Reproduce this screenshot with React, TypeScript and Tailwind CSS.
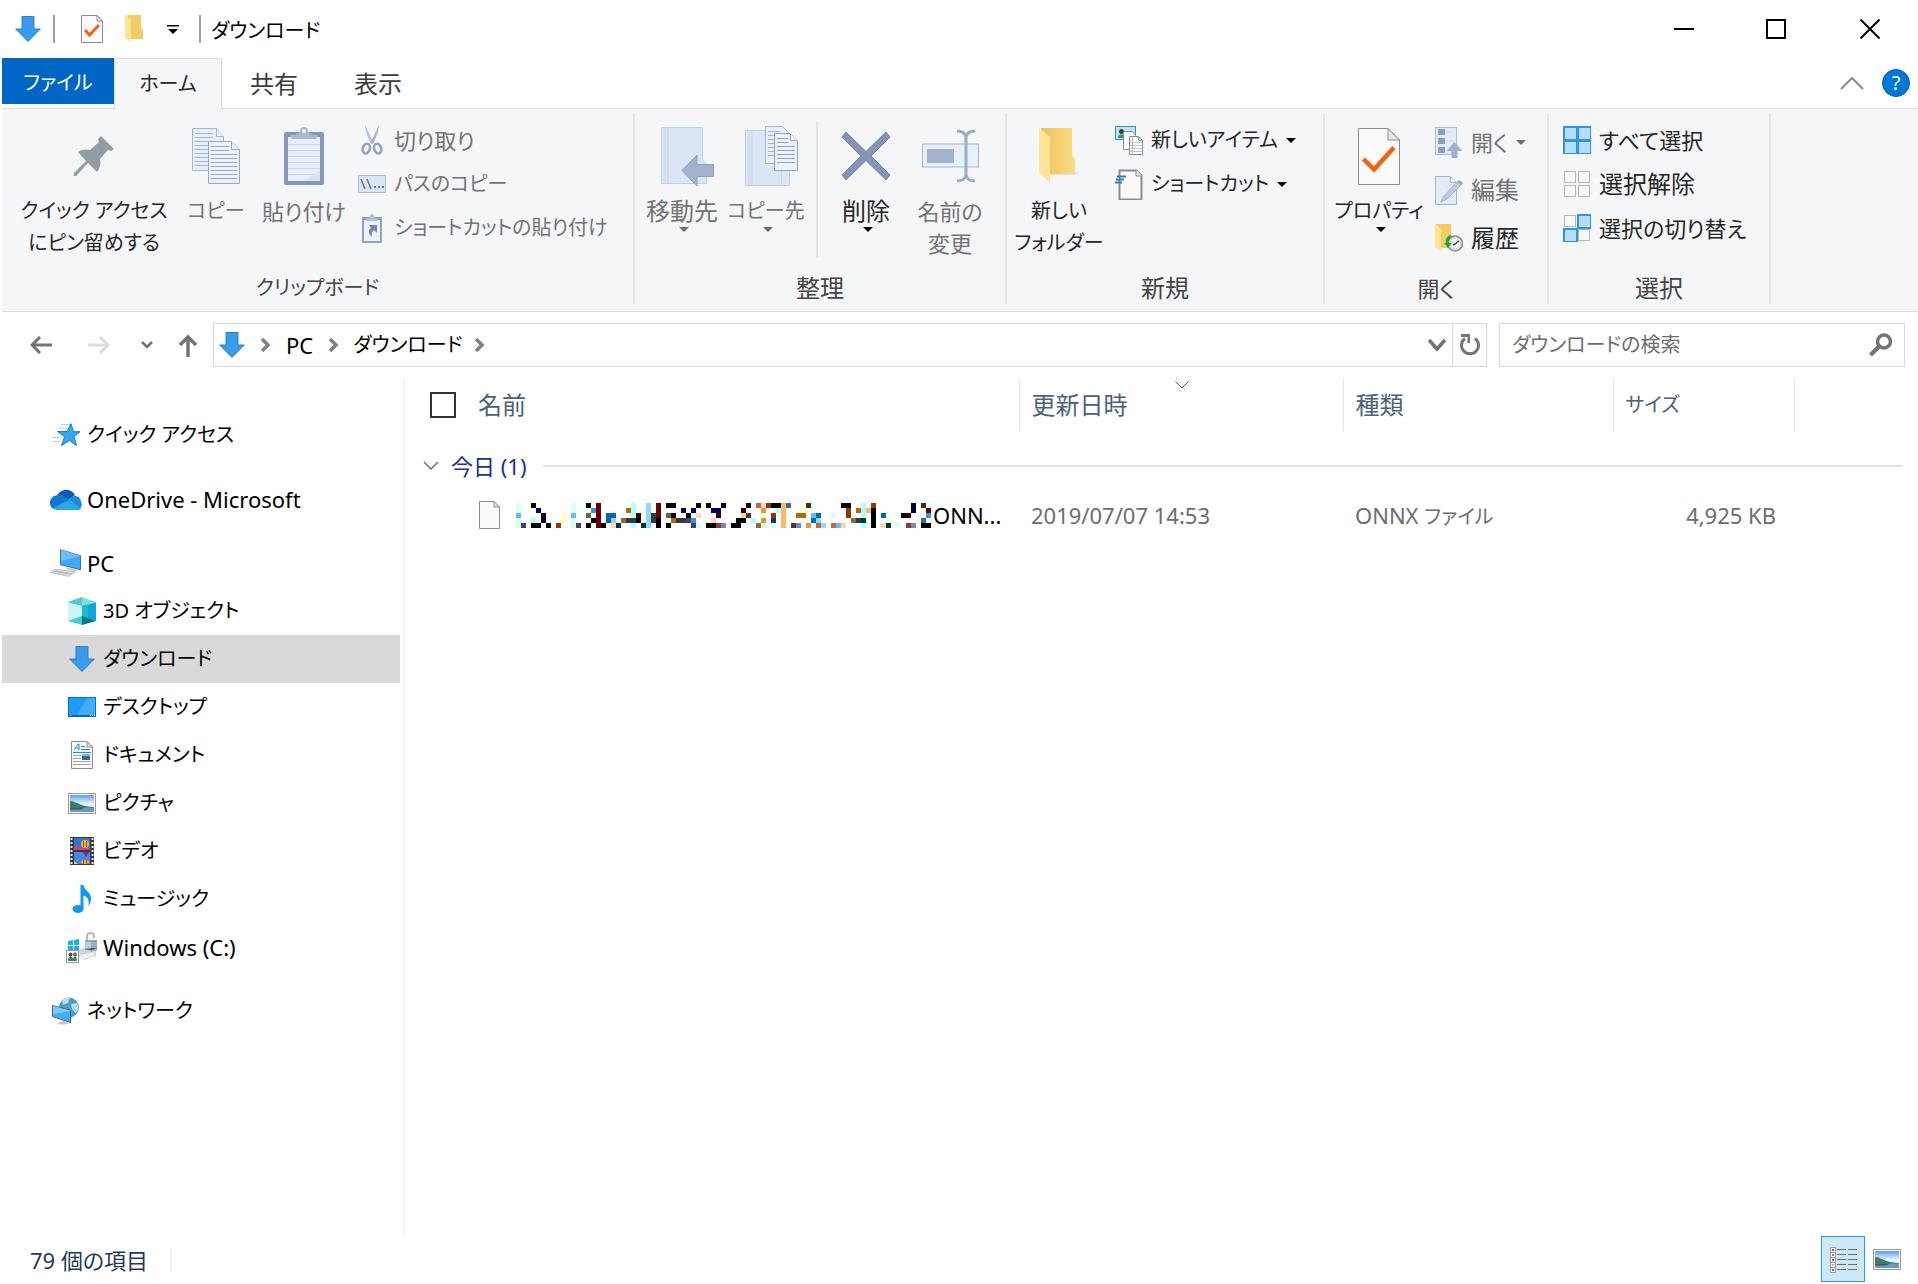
import React from "react";
import clsx from "clsx";

type IconProps = { className?: string };

/* ---------- shared icons ---------- */

const DownArrowIcon = ({ className }: IconProps) => (
  <svg width="26" height="26" viewBox="0 0 26 26" className={className}>
    <path
      d="M7 .5h12v12.500h6.300L13 25.500.7 13H7z"
      fill="#3a9bea"
      stroke="#2b7fc9"
      strokeLinejoin="round"
    />
  </svg>
);

const CaretIcon = ({ className }: IconProps) => (
  <svg width="10" height="5" viewBox="0 0 10 5" className={className}>
    <path d="M0 0h10L5 5z" fill="currentColor" />
  </svg>
);

const CrumbIcon = () => (
  <svg width="12" height="14" viewBox="0 0 12 14">
    <path d="M2 1l6 6-6 6" fill="none" stroke="#808080" strokeWidth="3.500" />
  </svg>
);

const PictureIcon = ({ className }: IconProps) => (
  <svg width="28" height="21" viewBox="0 0 28 21" className={className}>
    <defs>
      <linearGradient id="picture-sky" x1="0" x2="0" y1="0" y2="1">
        <stop offset="0" stopColor="#5a9bf8" />
        <stop offset=".5" stopColor="#e6f2fd" />
      </linearGradient>
    </defs>
    <rect x=".5" y=".5" width="27" height="20" fill="#fff" stroke="#9a9a9a" />
    <rect x="2" y="2" width="24" height="17" fill="url(#picture-sky)" />
    <path d="M2 8c4 0 6 2 9 3 4 2 10 3 15 3v1H2z" fill="#3f7d5c" />
    <rect x="2" y="14.500" width="24" height="4.500" fill="#6d97c4" />
    <path d="M2 14.500h16l-6 2H2z" fill="#2f5a78" />
  </svg>
);

const Page = ({ w, h, fold }: { w: number; h: number; fold: number }) => (
  <>
    <path
      d={`M.5 .5H${w - fold}L${w - 0.5} ${fold}V${h - 0.5}H.5z`}
      fill="#fbfbfb"
      stroke="#8c8c8c"
    />
    <path
      d={`M${w - fold} .5V${fold}H${w - 0.5}z`}
      fill="#e8e8e8"
      stroke="#8c8c8c"
    />
  </>
);

/* ---------- title bar icons ---------- */

const SmallPropertiesIcon = () => (
  <svg width="22" height="28" viewBox="0 0 22 28">
    <Page w={22} h={28} fold={6} />
    <path d="M4 15l4.500 5L18 10" fill="none" stroke="#f7630c" strokeWidth="3" />
  </svg>
);

const SmallFolderIcon = () => (
  <svg width="20" height="28" viewBox="0 0 20 28">
    <path d="M2 0h14v13l2 2v9H4z" fill="#f3cc66" />
    <path d="M0 0l6 5v22l-6-4z" fill="#ffe394" />
  </svg>
);

/* ---------- ribbon icons, large ---------- */

const PinIcon = () => (
  <svg width="42" height="42" viewBox="0 0 42 42">
    <path
      d="M28 1l13 13-3 2-3-1-8 9c1 5 0 9-3 13l-9-9L3 41H1v-3l12-12-8-9c4-3 8-3 12-2l9-8-1-3z"
      fill="#919da3"
    />
  </svg>
);

const textLines = (x: number, y: number, w: number, n: number, step: number) =>
  Array.from({ length: n }, (_, i) => (
    <path key={i} d={`M${x} ${y + i * step}h${w}`} strokeWidth="1" />
  ));

const CopyIcon = () => (
  <svg width="48" height="56" viewBox="0 0 48 56">
    <g fill="#e9effa" stroke="#a6b6d2">
      <path d="M.5 .5h24l7 8v34h-31z" />
      <path d="M24.500 .5v8h7" />
      {textLines(3, 5.5, 18, 2, 4)}
      {textLines(3, 13.5, 25, 7, 4)}
    </g>
    <g fill="#edf2fc" stroke="#97a9c9">
      <path d="M16.500 13.500h23l8 8v34h-31z" />
      <path d="M39.500 13.500v8h8" />
      {textLines(19, 18.5, 18, 2, 4)}
      {textLines(19, 26.5, 26, 7, 4)}
    </g>
  </svg>
);

const PasteIcon = () => (
  <svg width="40" height="58" viewBox="0 0 40 58">
    <rect y="5" width="40" height="53" rx="2" fill="#8497bd" />
    <rect x="4" y="10" width="32" height="44" fill="#e8effb" />
    <g stroke="#cad6ea">{textLines(4, 17.5, 32, 6, 6)}</g>
    <path d="M36 44v10H20z" fill="#d7e2f5" />
    <path d="M6 8c7 0 9-2 10-4a4 4 0 018 0c1 2 3 4 10 4l-2 4H8z" fill="#a9b7d0" />
    <circle cx="20" cy="4" r="2" fill="#f5f6f7" />
  </svg>
);

const MoveToIcon = () => (
  <svg width="63" height="60" viewBox="-10 0 63 60">
    <path d="M.5 1.500h41v32l4 5v19H.5z" fill="#dbe5f4" stroke="#c1cfe6" />
    <path d="M4 2v55M7 2v55" stroke="#cad7eb" />
    <path
      d="M21 44.500l15-15.500v9.500h16.500v12H36V60z"
      fill="#a3b1cc"
      stroke="#8c9fc2"
    />
  </svg>
);

const CopyToIcon = () => (
  <svg width="63" height="60" viewBox="-10 0 63 60">
    <path d="M.5 4.500h41v32l3 4v19H.5z" fill="#dbe5f4" stroke="#c1cfe6" />
    <path d="M4 5v54M7 5v54M36.500 40v19" stroke="#c5d3e9" />
    <g fill="#e9effa" stroke="#a6b6d2">
      <path d="M20.500 .5h17l6 6v31h-23z" />
      {textLines(23, 5.5, 12, 2, 4)}
      {textLines(23, 13.5, 18, 5, 4)}
    </g>
    <g fill="#edf2fc" stroke="#8fa2c5">
      <path d="M29.500 7.500h16l7 7v30h-23z" />
      <path d="M45.500 7.500v7h7" />
      {textLines(32, 12.5, 11, 2, 4)}
      {textLines(32, 20.5, 18, 5, 4)}
    </g>
  </svg>
);

const DeleteIcon = () => (
  <svg width="50" height="50" viewBox="0 0 50 50">
    <path
      d="M5 1l20 19.500L45 1l4 5-19 19 19 19-4 5-20-19.500L5 49l-4-5 19-19L1 6z"
      fill="#8494b6"
      stroke="#7285ad"
    />
  </svg>
);

const RenameIcon = () => (
  <svg width="57" height="54" viewBox="0 0 57 54">
    <rect x=".5" y="15" width="56" height="23" fill="#e8effc" stroke="#a2b4d6" />
    <rect x="5" y="20" width="27" height="14" fill="#a3b1cc" />
    <path
      d="M35 2c5 0 8 2 9 6 1-4 4-6 9-6M35 52c5 0 8-2 9-6 1 4 4 6 9 6M44 7v40"
      fill="none"
      stroke="#9cacc9"
      strokeWidth="3"
    />
  </svg>
);

const FolderIcon = () => (
  <svg width="40" height="56" viewBox="0 0 40 56">
    <defs>
      <linearGradient id="folder-body" x1="0" x2="1">
        <stop offset="0" stopColor="#e9c25c" />
        <stop offset="1" stopColor="#fddc82" />
      </linearGradient>
    </defs>
    <path d="M36 43l4 2-4 2H12v-4z" fill="#e6e3dc" />
    <path d="M2 0h31v28l3 3v15H10z" fill="url(#folder-body)" />
    <path d="M0 0l11 9v46L0 44z" fill="#ffe596" />
  </svg>
);

const PropertiesIcon = () => (
  <svg width="42" height="57" viewBox="0 0 42 57">
    <Page w={42} h={57} fold={12} />
    <path
      d="M5.500 31L16 41.500 36 19.500"
      fill="none"
      stroke="#f7630c"
      strokeWidth="4.500"
    />
  </svg>
);

/* ---------- ribbon icons, small ---------- */

const CutIcon = () => (
  <svg width="22" height="30" viewBox="0 0 22 30">
    <path d="M4 0l8.500 18-2.500 1C7 12 4 6 4 0z" fill="#b4c1d9" />
    <path d="M18 0L9.500 18l2.500 1c3-7 6-13 6-19z" fill="#a3b2cf" />
    <g fill="none" stroke="#8fa1c4" strokeWidth="2.500">
      <ellipse cx="5.500" cy="23.500" rx="3.500" ry="5" transform="rotate(18 5 23)" />
      <ellipse cx="16.500" cy="23.500" rx="3.500" ry="5" transform="rotate(-18 17 23)" />
    </g>
  </svg>
);

const CopyPathIcon = () => (
  <svg width="28" height="18" viewBox="0 0 28 18">
    <rect x=".5" y=".5" width="27" height="17" fill="#dbe5f6" stroke="#a7b6d2" />
    <path d="M3 4l4 10M9 4l4 10" stroke="#60749e" strokeWidth="1.500" />
    <path d="M16 12h2M20 12h2M24 12h2" stroke="#60749e" strokeWidth="2" />
  </svg>
);

const PasteShortcutIcon = () => (
  <svg width="20" height="29" viewBox="0 0 20 29">
    <rect y="3" width="20" height="26" rx="1" fill="#8fa1c4" />
    <rect x="2" y="6" width="16" height="21" fill="#edf2fc" />
    <path d="M4 5c3 0 4-1 4-3a2 2 0 014 0c0 2 1 3 4 3v2H4z" fill="#b4c1d9" />
    <path d="M7 11h8v8l-3-3c-2 2-3 4-2 7-4-3-4-7-1-9z" fill="#7388b3" />
  </svg>
);

const NewItemIcon = () => (
  <svg width="28" height="29" viewBox="0 0 28 29">
    <rect x=".5" y=".5" width="20" height="13" fill="#bfe3f8" stroke="#3c8dbc" />
    <path d="M3 12c0-5 6-5 7 0z" fill="#3f8f6c" />
    <circle cx="6.500" cy="5.500" r="2.500" fill="#4a3b30" />
    <path d="M8.500 5.500h9l3 4v14h-12z" fill="#fff" stroke="#8c8c8c" />
    <path d="M14.500 10.500h9l4 4v14h-13z" fill="#fff" stroke="#8c8c8c" />
    <path d="M23.500 10.500v4h4" fill="none" stroke="#8c8c8c" />
    <path d="M15 16.500h12M15 19.500h12M15 22.500h12M15 25.500h12" stroke="#a9cdec" />
    <path d="M17.500 11v17" stroke="#f0a0a0" />
  </svg>
);

const NewShortcutIcon = () => (
  <svg width="28" height="31" viewBox="0 0 28 31">
    <path d="M4.500 1.500h17l5 5v24h-22z" fill="#fafafa" stroke="#8c8c8c" strokeWidth="2" />
    <path d="M21 1v6h6" fill="#e8e8e8" stroke="#8c8c8c" />
    <path d="M2 7.500h9M1 10.500h8M0 13.500h7" stroke="#2f7fc1" strokeWidth="2" />
  </svg>
);

const OpenIcon = () => (
  <svg width="28" height="31" viewBox="0 0 28 31">
    <rect x=".5" y=".5" width="21" height="27" fill="#e3ebf8" stroke="#a9b9d6" />
    <g fill="#8b9dc1">
      <rect x="3" y="2" width="7" height="6" />
      <rect x="3" y="11" width="7" height="6" />
      <rect x="3" y="20" width="7" height="6" />
    </g>
    <path d="M12 5h6M12 14h6" stroke="#c3d0e6" />
    <path d="M19.500 15l8 9h-5v7h-6v-7h-5z" fill="#9fafcd" />
  </svg>
);

const EditIcon = () => (
  <svg width="28" height="29" viewBox="0 0 28 29">
    <path d="M.5 .5h15l6 6v22H.5z" fill="#e3ebf8" stroke="#a0b2d4" />
    <path d="M15.500 .5v6h6" fill="#f4f7fd" stroke="#a0b2d4" />
    <path d="M6 26l2-5L23 5l4 3-15 15z" fill="#bccae2" stroke="#9fb0d0" />
    <path d="M22 6l2-2 4 3-2 2z" fill="#94a7ca" />
  </svg>
);

const HistoryIcon = () => (
  <svg width="28" height="28" viewBox="0 0 28 28">
    <path d="M1 0h15v12l2 2v10H5z" fill="#f3cc66" />
    <path d="M0 0l6 5v22l-6-4z" fill="#ffe394" />
    <circle cx="20" cy="19.500" r="7.500" fill="#d5d8da" stroke="#8a8f94" strokeWidth="1.500" />
    <circle cx="20" cy="19.500" r="5" fill="#eceeef" />
    <path d="M20 20l4-3M20 20l-2 1" stroke="#444" strokeWidth="1.500" />
    <path d="M16 11c-4 1-6 4-5 8H9l4 5 4-5h-3c0-3 1-5 3-6z" fill="#23a63a" />
  </svg>
);

const cells = [
  [1, 1],
  [15, 1],
  [1, 15],
  [15, 15],
];

const SelectIcon = ({ on }: { on: number[] }) => (
  <svg width="28" height="28" viewBox="0 0 28 28">
    {cells.map(([x, y], i) => (
      <rect
        key={i}
        x={on.includes(i) ? x : x + 0.5}
        y={on.includes(i) ? y : y + 0.5}
        width={on.includes(i) ? 13 : 11}
        height={on.includes(i) ? 13 : 11}
        fill={on.includes(i) ? "#b5defa" : "#f9f9f9"}
        stroke={on.includes(i) ? "#2d95e3" : "#b5b5b5"}
        strokeWidth={on.includes(i) ? 2 : 1}
      />
    ))}
  </svg>
);

/* ---------- tree icons ---------- */

const QuickAccessIcon = () => (
  <svg width="30" height="24" viewBox="0 0 30 24">
    <path d="M10 1.500h9M7 5h9M1 14.500h8M2 18.500h6" stroke="#a5d3f2" />
    <path
      d="M20 .7l2.500 8H29l-6 4.800 2.500 9.200-7-5.200-8 5.200 3-9L6.500 8.500H16z"
      fill="#35a7f0"
      stroke="#1c7fc6"
    />
  </svg>
);

const OneDriveIcon = () => (
  <svg width="32" height="21" viewBox="0 0 32 21">
    <path d="M7 7C10 0 20-2 25 6l-8 6z" fill="#0b5cb5" />
    <path d="M6 6.500C12 4 16 9 22 12L3 20C-2 16-1 8 6 6.500z" fill="#1277d3" />
    <path d="M19 10c3-5 12-4 12 3 2 3 0 6-2 7z" fill="#1b8be0" />
    <path d="M3 19l16-8 12 8c-1 2-2 2-4 2H7c-2 0-3-1-4-2z" fill="#29a7ea" />
  </svg>
);

const PcIcon = () => (
  <svg width="32" height="28" viewBox="0 0 32 28">
    <path d="M10.500 .7l20 6v14l-20-5z" fill="#3fa9f5" stroke="#5d6b78" />
    <path d="M11 12L30 7v-0.500L11 1z" fill="#6cbffa" />
    <path d="M17 18l8 2 3 2-5 1-7-3z" fill="#c9ced3" />
    <path d="M5 20l20 3-6 4.500L0 23.500z" fill="#d9dcdf" stroke="#b3b8bd" strokeWidth=".7" />
    <path d="M4 22l18 3M8 21l-5 3M13 22l-5 3M18 23l-5 3" stroke="#a3a9ae" strokeWidth=".7" />
  </svg>
);

const CubeIcon = () => (
  <svg width="28" height="28" viewBox="0 0 28 28">
    <path d="M0 5l14-5v9L0 6z" fill="#54c8cb" />
    <path d="M28 5L14 0v9l14-3z" fill="#7fe0dd" />
    <path d="M0 5.500L14 9v11L0 24z" fill="#cdf3f3" />
    <path d="M28 5.500L14 9v11l14 4z" fill="#12a5dd" />
    <path d="M14 9l6-1.500V22l-6-2z" fill="#19bcc8" />
    <path d="M0 24l14-5v9z" fill="#3ecfd2" />
    <path d="M28 24l-14-5v9z" fill="#067585" />
  </svg>
);

const DesktopIcon = () => (
  <svg width="28" height="20" viewBox="0 0 28 20">
    <rect x=".5" y=".5" width="27" height="19" fill="#1c9bf8" stroke="#0a6fba" />
    <path d="M27 1v17H9L19 1z" fill="#41aefb" />
    <path d="M1 18.500h26" stroke="#0d5f9e" />
    <path d="M2 18.500h2M22 18.500h5" stroke="#fff" strokeDasharray="1 1" />
  </svg>
);

const DocumentIcon = () => (
  <svg width="22" height="28" viewBox="0 0 22 28">
    <Page w={22} h={28} fold={6} />
    <path d="M3 9l4-6h1v6M5 7h3M10 5.500h4M10 8.500h9" fill="none" stroke="#1a8fe0" />
    <path d="M2 11.500h18" stroke="#1a8fe0" />
    <path d="M2 14.500h8M2 17.500h8M2 20.500h18M2 23.500h18" stroke="#a5a5a5" />
    <rect x="11" y="13" width="8" height="6" fill="#33698f" />
    <rect x="11" y="13" width="8" height="2" fill="#7fb4e8" />
  </svg>
);

const VideoIcon = () => (
  <svg width="24" height="28" viewBox="0 0 24 28">
    <rect width="24" height="28" fill="#3a3a3a" />
    <path d="M1.500 1v27M22.500 1v27" stroke="#e8e8e8" strokeWidth="2" strokeDasharray="2 2" />
    <rect x="4" y="1" width="16" height="12" fill="#3173dd" />
    <rect x="4" y="15" width="16" height="12" fill="#4a86e6" />
    <path d="M4 10c2-2 4-1 5 0l11 1v2H4z" fill="#c7447c" />
    <ellipse cx="15" cy="7" rx="4" ry="4" fill="#f0c514" />
    <path d="M13.500 4v6M16.500 4v6" stroke="#c4281c" />
    <path d="M13 15h6l-3 5z" fill="#7a2a86" />
    <ellipse cx="15" cy="25" rx="4" ry="2" fill="#f0c514" />
    <path d="M13.500 23v4M16.500 23v4" stroke="#c4281c" />
    <path d="M4 24l4 3H4z" fill="#e6d22a" />
  </svg>
);

const MusicIcon = () => (
  <svg width="20" height="28" viewBox="0 0 20 28">
    <ellipse cx="6" cy="24" rx="5.500" ry="4" fill="#0d99f2" />
    <path d="M8.500 0h3c1 6 8 7 7.500 14 0 3-1 5-2.500 7 1-6-1-9-5-10.500V24h-3z" fill="#0d99f2" />
  </svg>
);

const DriveIcon = () => (
  <svg width="32" height="31" viewBox="0 0 32 31">
    <g fill="#13b1f0">
      <path d="M2 9l5-1v5H2zM8 8l5-1v6H8zM2 14h5v4H2zM8 14h5v4H8z" />
    </g>
    <path d="M13 18l8-4 9 4v6l-12 4-5-3z" fill="#d3d6d9" />
    <path d="M14 23l14-3v4l-14 4z" fill="#eceeef" />
    <path d="M21 10V4c0-4 7-4 7 0v2" fill="none" stroke="#b4b9be" strokeWidth="2" />
    <path d="M19 9l12-1v10l-6 2-6-2z" fill="#c3ccd3" />
    <path d="M25 9h6v9l-6 2z" fill="#a2adb6" />
    <path d="M19 9h12M19 17l6 1 6-2" stroke="#3f8fc5" />
    <rect x=".5" y="18.500" width="12" height="12" fill="#fff" stroke="#9a9a9a" />
    <path d="M2 29c0-6 4-6 5-2 1-4 4-4 4 2z" fill="#2f8b74" />
    <circle cx="4.500" cy="22.500" r="2" fill="#6d4a35" />
    <circle cx="9" cy="22.500" r="2" fill="#8a6246" />
  </svg>
);

const NetworkIcon = () => (
  <svg width="28" height="28" viewBox="0 0 28 28">
    <circle cx="17" cy="10.500" r="10" fill="#4d9cc4" />
    <path d="M10 3c3-3 6-2 8-2l-2 5-5 2zM19 7l6-1c3 5 1 8-1 10l-4-4zM13 2l9 2" fill="#b9dcec" />
    <path d="M.5 8.500l18 5v12l-18-6z" fill="#43aef5" stroke="#4c6678" />
    <path d="M1 17l17-3v-0.500L1 9z" fill="#7fcafa" />
    <path d="M5 26l7-2 5 2c-3 2-9 2-12 0z" fill="#c2c7cb" />
  </svg>
);

/* ---------- pixelated file name ---------- */

const mosaicColors: Record<string, string> = {
  K: "#000000",
  N: "#000068",
  n: "#000038",
  R: "#680000",
  r: "#380000",
  C: "#d8ffff",
  c: "#b0ffff",
  B: "#90d8ff",
  b: "#68b8ff",
  D: "#0068b8",
  d: "#4090e0",
  O: "#b86800",
  o: "#ffb868",
  G: "#383838",
  L: "#686838",
  Y: "#ffffb8",
  y: "#ffffd8",
  P: "#ffd8b8",
  p: "#404070",
  T: "#003838",
  W: "#906838",
  M: "#903838",
  U: "#6890b8",
  g: "#d8ffd8",
  F: "#903800",
  e: "#e09848",
  m: "#c06840",
  s: "#3868a0",
  l: "#383800",
  x: "#603030",
  H: "#003890",
  a: "#ffd898",
};

// one string per row, "<column><color>"
const mosaicRows = [
  "0C 3K 11C 14K 16R 23c 26B 28R 30K 31K 36K 38K 41n 46K 48m 49P 50F 51K 52K 53o 54s 58l 59C 65K 66K 69c 71F 79n 81l 82C",
  "0C 4N 11C 15d 16R 22O 23c 26B 28R 33N 35N 39N 40N 45r 49e 52c 53o 57y 66F 68O 69c 70o 71K 79n 82R",
  "0b 5K 9Y 11b 14L 16R 18D 19D 23c 24r 26B 27G 28R 30L 31n 34K 36P 40r 45a 46x 49Y 51F 53o 56O 57O 59b 60D 63C 66F 69c 71K 73D 77K 78r 82d",
  "0C 3c 5n 9Y 11C 15K 16R 18D 19B 21W 22G 23G 24K 26B 27G 28K 31O 32G 33G 34p 35d 39P 44K 45n 47c 49e 51H 53o 58y 59D 60B 67W 68G 69T 71K 75y 81s",
  "0g 1p 3K 4K 6K 8F 11g 12p 14K 16R 17K 19P 20T 23c 25T 26B 28K 30K 35p 36C 38K 39K 40M 41U 43K 44K 48W 49g 51C 53o 55x 56U 58e 60m 61B 63m 64b 65a 69c 71K 73P 74T 76C 78M 79U 81K 82K",
];

const Mosaic = () => (
  <svg
    width="415"
    height="25"
    viewBox="0 0 83 5"
    shapeRendering="crispEdges"
    className="shrink-0"
  >
    {mosaicRows.map((row, y) =>
      row
        .split(" ")
        .map((cell) => (
          <rect
            key={`${y}-${cell}`}
            x={parseInt(cell)}
            y={y}
            width="1"
            height="1"
            fill={mosaicColors[cell.slice(-1)]}
          />
        )),
    )}
  </svg>
);

/* ---------- ribbon ---------- */

type RibbonButtonProps = {
  icon: React.ReactNode;
  label: React.ReactNode;
  className?: string;
  disabled?: boolean;
  menu?: boolean;
};

const LargeButton = ({
  icon,
  label,
  className,
  disabled,
  menu,
}: RibbonButtonProps) => (
  <button
    type="button"
    disabled={disabled}
    className={clsx(
      "flex flex-col items-center shrink-0 pt-[5px] leading-8 whitespace-nowrap",
      disabled ? "text-[#737373]" : "text-[#262626]",
      className,
    )}
  >
    <span className="mb-[2px] flex h-[74px] items-center justify-center">
      {icon}
    </span>
    <span>{label}</span>
    {menu && (
      <CaretIcon
        className={clsx("ml-1", disabled ? "text-[#6d6d6d]" : "text-black")}
      />
    )}
  </button>
);

const SmallButton = ({
  icon,
  label,
  className,
  disabled,
  menu,
}: RibbonButtonProps) => (
  <button
    type="button"
    disabled={disabled}
    className={clsx(
      "flex items-center gap-2 whitespace-nowrap",
      disabled ? "text-[#737373]" : "text-[#262626]",
      className,
    )}
  >
    <span className="flex w-7 justify-center">{icon}</span>
    <span>{label}</span>
    {menu && (
      <CaretIcon className={disabled ? "text-[#6d6d6d]" : "text-black"} />
    )}
  </button>
);

type RibbonGroupProps = {
  title: string;
  titleClassName: string;
  className: string;
  bodyClassName: string;
  children: React.ReactNode;
};

const RibbonGroup = ({
  title,
  titleClassName,
  className,
  bodyClassName,
  children,
}: RibbonGroupProps) => (
  <section
    className={clsx(
      "flex shrink-0 flex-col border-r-2 border-[#e2e3e4]",
      className,
    )}
  >
    <div className={clsx("flex flex-1 items-start", bodyClassName)}>
      {children}
    </div>
    <h2 className={clsx("text-center leading-8 text-[#444]", titleClassName)}>
      {title}
    </h2>
  </section>
);

const Ribbon = () => (
  <div className="flex h-[204px] shrink-0 overflow-hidden border-y border-[#dadbdc] bg-[#f5f6f7] pt-[5px] pb-[7px]">
    <RibbonGroup
      title="クリップボード"
      titleClassName="text-xl"
      className="w-[633px]"
      bodyClassName="pl-4"
    >
      <LargeButton
        className="w-[152px] text-xl"
        icon={<PinIcon />}
        label={
          <>
            クイック アクセス
            <br />
            にピン留めする
          </>
        }
      />
      <LargeButton className="ml-2 w-[76px] text-xl" icon={<CopyIcon />} label="コピー" disabled />
      <LargeButton className="w-[100px] text-[22px]" icon={<PasteIcon />} label="貼り付け" disabled />
      <div className="ml-1 flex flex-col pt-1">
        <SmallButton className="h-11 text-[22px]" icon={<CutIcon />} label="切り取り" disabled />
        <SmallButton className="h-11 text-xl" icon={<CopyPathIcon />} label="パスのコピー" disabled />
        <SmallButton
          className="h-11 text-xl"
          icon={<PasteShortcutIcon />}
          label="ショートカットの貼り付け"
          disabled
        />
      </div>
    </RibbonGroup>

    <RibbonGroup
      title="整理"
      titleClassName="text-2xl"
      className="w-[372px]"
      bodyClassName="pl-[7px]"
    >
      <LargeButton className="w-20 text-2xl" icon={<MoveToIcon />} label="移動先" disabled menu />
      <LargeButton className="w-[88px] text-xl" icon={<CopyToIcon />} label="コピー先" disabled menu />
      <span className="mt-2 mr-1 ml-1.5 h-[136px] w-[2px] bg-[#e2e3e4]" />
      <LargeButton className="w-[88px] text-2xl" icon={<DeleteIcon />} label="削除" menu />
      <LargeButton
        className="w-20 text-[22px]"
        icon={<RenameIcon />}
        label={
          <>
            名前の
            <br />
            変更
          </>
        }
        disabled
      />
    </RibbonGroup>

    <RibbonGroup
      title="新規"
      titleClassName="text-2xl"
      className="w-[318px]"
      bodyClassName="pl-1"
    >
      <LargeButton
        className="w-24 text-xl"
        icon={<FolderIcon />}
        label={
          <>
            新しい
            <br />
            フォルダー
          </>
        }
      />
      <div className="ml-2 flex flex-col pt-1">
        <SmallButton className="h-11 text-xl" icon={<NewItemIcon />} label="新しいアイテム" menu />
        <SmallButton className="h-11 text-xl" icon={<NewShortcutIcon />} label="ショートカット" menu />
      </div>
    </RibbonGroup>

    <RibbonGroup
      title="開く"
      titleClassName="text-[22px]"
      className="w-[224px]"
      bodyClassName="pl-1"
    >
      <LargeButton className="w-[100px] text-xl" icon={<PropertiesIcon />} label="プロパティ" menu />
      <div className="ml-1.5 flex flex-col pt-1">
        <SmallButton className="h-12 text-[22px]" icon={<OpenIcon />} label="開く" disabled menu />
        <SmallButton className="h-12 text-2xl" icon={<EditIcon />} label="編集" disabled />
        <SmallButton className="h-12 text-2xl" icon={<HistoryIcon />} label="履歴" />
      </div>
    </RibbonGroup>

    <RibbonGroup
      title="選択"
      titleClassName="text-2xl"
      className="w-[222px]"
      bodyClassName="pl-[14px]"
    >
      <div className="flex flex-col pt-1">
        <SmallButton className="h-11 text-[22px]" icon={<SelectIcon on={[0, 1, 2, 3]} />} label="すべて選択" />
        <SmallButton className="h-11 text-2xl" icon={<SelectIcon on={[]} />} label="選択解除" />
        <SmallButton className="h-11 text-[22px]" icon={<SelectIcon on={[1, 2]} />} label="選択の切り替え" />
      </div>
    </RibbonGroup>
  </div>
);

/* ---------- window chrome ---------- */

const TitleBar = () => (
  <header className="flex h-[58px] shrink-0 items-center">
    <DownArrowIcon className="ml-[13px]" />
    <span className="ml-3 h-7 w-[2px] bg-[#a0a0a0]" />
    <button type="button" aria-label="プロパティ" className="ml-[26px]">
      <SmallPropertiesIcon />
    </button>
    <button type="button" aria-label="新しいフォルダー" className="ml-[22px]">
      <SmallFolderIcon />
    </button>
    <button type="button" aria-label="カスタマイズ" className="ml-[22px]">
      <svg width="12" height="9" viewBox="0 0 12 9">
        <path d="M0 0h12v1.500H0zM1 4h10L6 9z" />
      </svg>
    </button>
    <span className="ml-5 h-7 w-[2px] bg-[#a0a0a0]" />
    <h1 className="ml-[10px] pt-1 text-xl text-black">ダウンロード</h1>
    <div className="ml-auto flex items-center">
      <button type="button" aria-label="最小化" className="flex w-[92px] justify-center">
        <svg width="20" height="20" viewBox="0 0 20 20">
          <path d="M0 10h20" stroke="#000" strokeWidth="2" />
        </svg>
      </button>
      <button type="button" aria-label="最大化" className="flex w-[92px] justify-center">
        <svg width="20" height="20" viewBox="0 0 20 20">
          <rect x="1" y="1" width="18" height="18" fill="none" stroke="#000" strokeWidth="2" />
        </svg>
      </button>
      <button type="button" aria-label="閉じる" className="flex w-24 justify-center">
        <svg width="20" height="20" viewBox="0 0 20 20">
          <path d="M.5 .5l19 19M19.500 .5l-19 19" stroke="#000" strokeWidth="2" />
        </svg>
      </button>
    </div>
  </header>
);

const Tabs = () => (
  <nav className="flex h-[50px] shrink-0 items-start text-[#3b3b3b]">
    <button type="button" className="h-[46px] w-28 bg-[#0066c5] pt-1 text-xl text-white">
      ファイル
    </button>
    <button
      type="button"
      className="relative h-[51px] w-[108px] border border-b-0 border-[#dadbdc] bg-[#f5f6f7] text-xl text-[#262626]"
    >
      ホーム
    </button>
    <button type="button" className="h-[51px] w-[104px] text-2xl">
      共有
    </button>
    <button type="button" className="h-[51px] w-[104px] text-2xl">
      表示
    </button>
    <div className="mt-[11px] ml-auto flex items-center gap-[18px] pr-2">
      <button type="button" aria-label="リボンの最小化">
        <svg width="24" height="13" viewBox="0 0 24 13">
          <path d="M1 12L12 1l11 11" fill="none" stroke="#8a8a8a" strokeWidth="2" />
        </svg>
      </button>
      <button
        type="button"
        className="size-7 rounded-full border border-[#0062ad] bg-[#0078d7] text-xl leading-6 text-white"
      >
        ?
      </button>
    </div>
  </nav>
);

const AddressRow = () => (
  <div className="flex shrink-0 items-center pt-[11px] pr-[13px] pb-3">
    <button type="button" aria-label="戻る" className="ml-7">
      <svg width="22" height="18" viewBox="0 0 22 18">
        <path d="M22 9H3M10 1L2 9l8 8" fill="none" stroke="#737373" strokeWidth="3" />
      </svg>
    </button>
    <button type="button" aria-label="進む" className="ml-9" disabled>
      <svg width="22" height="18" viewBox="0 0 22 18">
        <path d="M0 9h19M12 1l8 8-8 8" fill="none" stroke="#dcdcdc" strokeWidth="3" />
      </svg>
    </button>
    <button type="button" aria-label="最近表示した場所" className="ml-[31px]">
      <svg width="12" height="8" viewBox="0 0 12 8">
        <path d="M1 1l5 5 5-5" fill="none" stroke="#737373" strokeWidth="2.500" />
      </svg>
    </button>
    <button type="button" aria-label="上へ" className="ml-[26px]">
      <svg width="18" height="23" viewBox="0 0 18 23">
        <path d="M9 23V3M1 11l8-8 8 8" fill="none" stroke="#737373" strokeWidth="3.500" />
      </svg>
    </button>
    <div className="ml-4 flex h-11 flex-1 items-center border border-[#d9d9d9] pl-[5px] text-black">
      <DownArrowIcon />
      <span className="ml-[15px]">
        <CrumbIcon />
      </span>
      <a href="#pc" className="ml-[14px] text-[22px]">
        PC
      </a>
      <span className="ml-[15px]">
        <CrumbIcon />
      </span>
      <a href="#downloads" className="ml-[13px] text-xl">
        ダウンロード
      </a>
      <span className="ml-3">
        <CrumbIcon />
      </span>
      <button type="button" aria-label="以前の場所" className="mr-[6px] ml-auto">
        <svg width="18" height="14" viewBox="0 0 18 14">
          <path d="M1 2l8 9 8-9" fill="none" stroke="#737373" strokeWidth="3.500" />
        </svg>
      </button>
      <button
        type="button"
        aria-label="最新の情報に更新"
        className="flex h-full w-[34px] items-center justify-center border-l border-[#d9d9d9]"
      >
        <svg width="20" height="22" viewBox="0 0 20 22">
          <path
            d="M15 4.500A8.500 8.500 0 115 4.500"
            fill="none"
            stroke="#737373"
            strokeWidth="3"
          />
          <path d="M1 0h9v9H7.500V3H1z" fill="#737373" />
        </svg>
      </button>
    </div>
    <label className="ml-3 flex h-11 w-[406px] items-center border border-[#d9d9d9] pr-[11px] pl-3">
      <input
        type="search"
        aria-label="ダウンロードの検索"
        placeholder="ダウンロードの検索"
        className="min-w-0 flex-1 text-xl outline-none placeholder:text-[#6d6d6d]"
      />
      <svg width="24" height="24" viewBox="0 0 24 24">
        <circle cx="15" cy="8.500" r="6.500" fill="none" stroke="#737373" strokeWidth="3.500" />
        <path d="M10.500 13L1.500 22" stroke="#737373" strokeWidth="4" />
      </svg>
    </label>
  </div>
);

/* ---------- navigation tree ---------- */

type TreeItemProps = {
  icon: React.ReactNode;
  label: string;
  className?: string;
  nested?: boolean;
  selected?: boolean;
};

const TreeItem = ({ icon, label, className, nested, selected }: TreeItemProps) => (
  <a
    href={`#${label}`}
    className={clsx(
      "flex h-12 items-center gap-[5px] whitespace-nowrap",
      nested ? "pl-16" : "pl-12",
      selected && "bg-[#d9d9d9]",
      className ?? "text-xl",
    )}
  >
    <span className="flex w-8 justify-center">{icon}</span>
    <span>{label}</span>
  </a>
);

const Tree = () => (
  <nav className="flex w-[403px] shrink-0 flex-col border-r-2 border-[#f5f5f5] pt-8 pr-[3px] text-black">
    <TreeItem icon={<QuickAccessIcon />} label="クイック アクセス" />
    <TreeItem icon={<OneDriveIcon />} label="OneDrive - Microsoft" className="mt-4 text-[22px]" />
    <TreeItem icon={<PcIcon />} label="PC" className="mt-4 text-[22px]" />
    <TreeItem icon={<CubeIcon />} label="3D オブジェクト" nested />
    <TreeItem icon={<DownArrowIcon />} label="ダウンロード" nested selected />
    <TreeItem icon={<DesktopIcon />} label="デスクトップ" nested />
    <TreeItem icon={<DocumentIcon />} label="ドキュメント" nested />
    <TreeItem icon={<PictureIcon />} label="ピクチャ" nested />
    <TreeItem icon={<VideoIcon />} label="ビデオ" nested />
    <TreeItem icon={<MusicIcon />} label="ミュージック" nested />
    <TreeItem icon={<DriveIcon />} label="Windows (C:)" className="text-[22px]" nested />
    <TreeItem icon={<NetworkIcon />} label="ネットワーク" className="mt-4 text-xl" />
  </nav>
);

/* ---------- file list ---------- */

const FileList = () => (
  <div className="min-w-0 flex-1 pr-[15px]">
    <table className="w-full table-fixed border-collapse text-left">
      <colgroup>
        <col className="w-[614px]" />
        <col className="w-[324px]" />
        <col className="w-[270px]" />
        <col className="w-[181px]" />
        <col />
      </colgroup>
      <thead className="text-[#4c607a]">
        <tr className="h-[52px]">
          <th className="border-r border-[#e5e5e5] font-normal">
            <div className="flex items-center gap-[22px] pl-[25px] text-2xl">
              <input
                type="checkbox"
                aria-label="すべて選択"
                className="size-[26px] appearance-none border-2 border-[#333]"
              />
              名前
            </div>
          </th>
          <th className="relative border-r border-[#e5e5e5] pl-3 text-2xl font-normal">
            更新日時
            <svg
              width="14"
              height="8"
              viewBox="0 0 14 8"
              className="absolute top-[2px] left-[155px]"
            >
              <path d="M.5 .5L7 7l6.500-6.500" fill="none" stroke="#555" />
            </svg>
          </th>
          <th className="border-r border-[#e5e5e5] pl-3 text-2xl font-normal">種類</th>
          <th className="border-r border-[#e5e5e5] pl-3 text-xl font-normal">サイズ</th>
          <td />
        </tr>
      </thead>
      <tbody className="text-[#6d6d6d]">
        <tr className="h-[60px]">
          <td colSpan={5}>
            <div className="flex items-center pt-2.5 pl-[18px]">
              <svg width="16" height="10" viewBox="0 0 16 10">
                <path d="M1 1l7 7 7-7" fill="none" stroke="#6d6d6d" strokeWidth="1.500" />
              </svg>
              <span className="ml-3 text-[22px] text-[#1e3287]">今日 (1)</span>
              <span className="ml-4 h-[2px] flex-1 bg-[#e2e2e2]" />
            </div>
          </td>
        </tr>
        <tr className="h-12 text-[22px]">
          <td>
            <div className="flex items-center pl-[74px]">
              <svg width="21" height="28" viewBox="0 0 21 28" className="mr-4 shrink-0">
                <Page w={21} h={28} fold={6} />
              </svg>
              <Mosaic />
              <span className="ml-[2px] text-black">ONN...</span>
            </div>
          </td>
          <td className="pl-3">2019/07/07 14:53</td>
          <td className="pl-3">
            ONNX <span className="text-xl">ファイル</span>
          </td>
          <td className="pr-[18px] text-right">4,925 KB</td>
          <td />
        </tr>
      </tbody>
    </table>
  </div>
);

const StatusBar = () => (
  <footer className="flex h-12 shrink-0 items-start">
    <div className="flex h-12 items-center pl-7 text-[22px] text-[#1e395b]">
      79 個の項目
      <span className="ml-[22px] h-[22px] w-[2px] bg-[#f0f0f0]" />
    </div>
    <div className="ml-auto flex items-center gap-2 pr-[17px]">
      <button
        type="button"
        aria-label="詳細"
        className="flex h-[46px] w-11 items-end justify-center border border-[#26a0da] bg-[#cce8f6] pb-[7px] pl-[2px]"
      >
        <svg width="28" height="27" viewBox="0 0 28 27">
          {["#3a78b5", "#8a8f2a", "#c3402f", "#a9c0a0", "#3a78b5"].map((color, i) => (
            <g key={i}>
              <rect x=".5" y={i * 5 + 0.5} width="5" height="5" fill="#fff" stroke="#999" />
              <rect x="2" y={i * 5 + 2} width="2" height="2" fill={color} />
              <path d={`M7 ${i * 5 + 2.5}h9M18 ${i * 5 + 2.5}h9`} stroke="#6d6d6d" />
            </g>
          ))}
        </svg>
      </button>
      <button type="button" aria-label="大アイコン">
        <PictureIcon />
      </button>
    </div>
  </footer>
);

const App: React.FC = () => {
  return (
    <div
      lang="ja"
      className="flex min-h-screen flex-col bg-white pl-[2px] font-['Noto_Sans','Noto_Sans_CJK_JP',sans-serif] [font-feature-settings:'palt']"
    >
      <TitleBar />
      <Tabs />
      <Ribbon />
      <AddressRow />
      <main className="flex flex-1">
        <Tree />
        <FileList />
      </main>
      <StatusBar />
    </div>
  );
};

export default App;
